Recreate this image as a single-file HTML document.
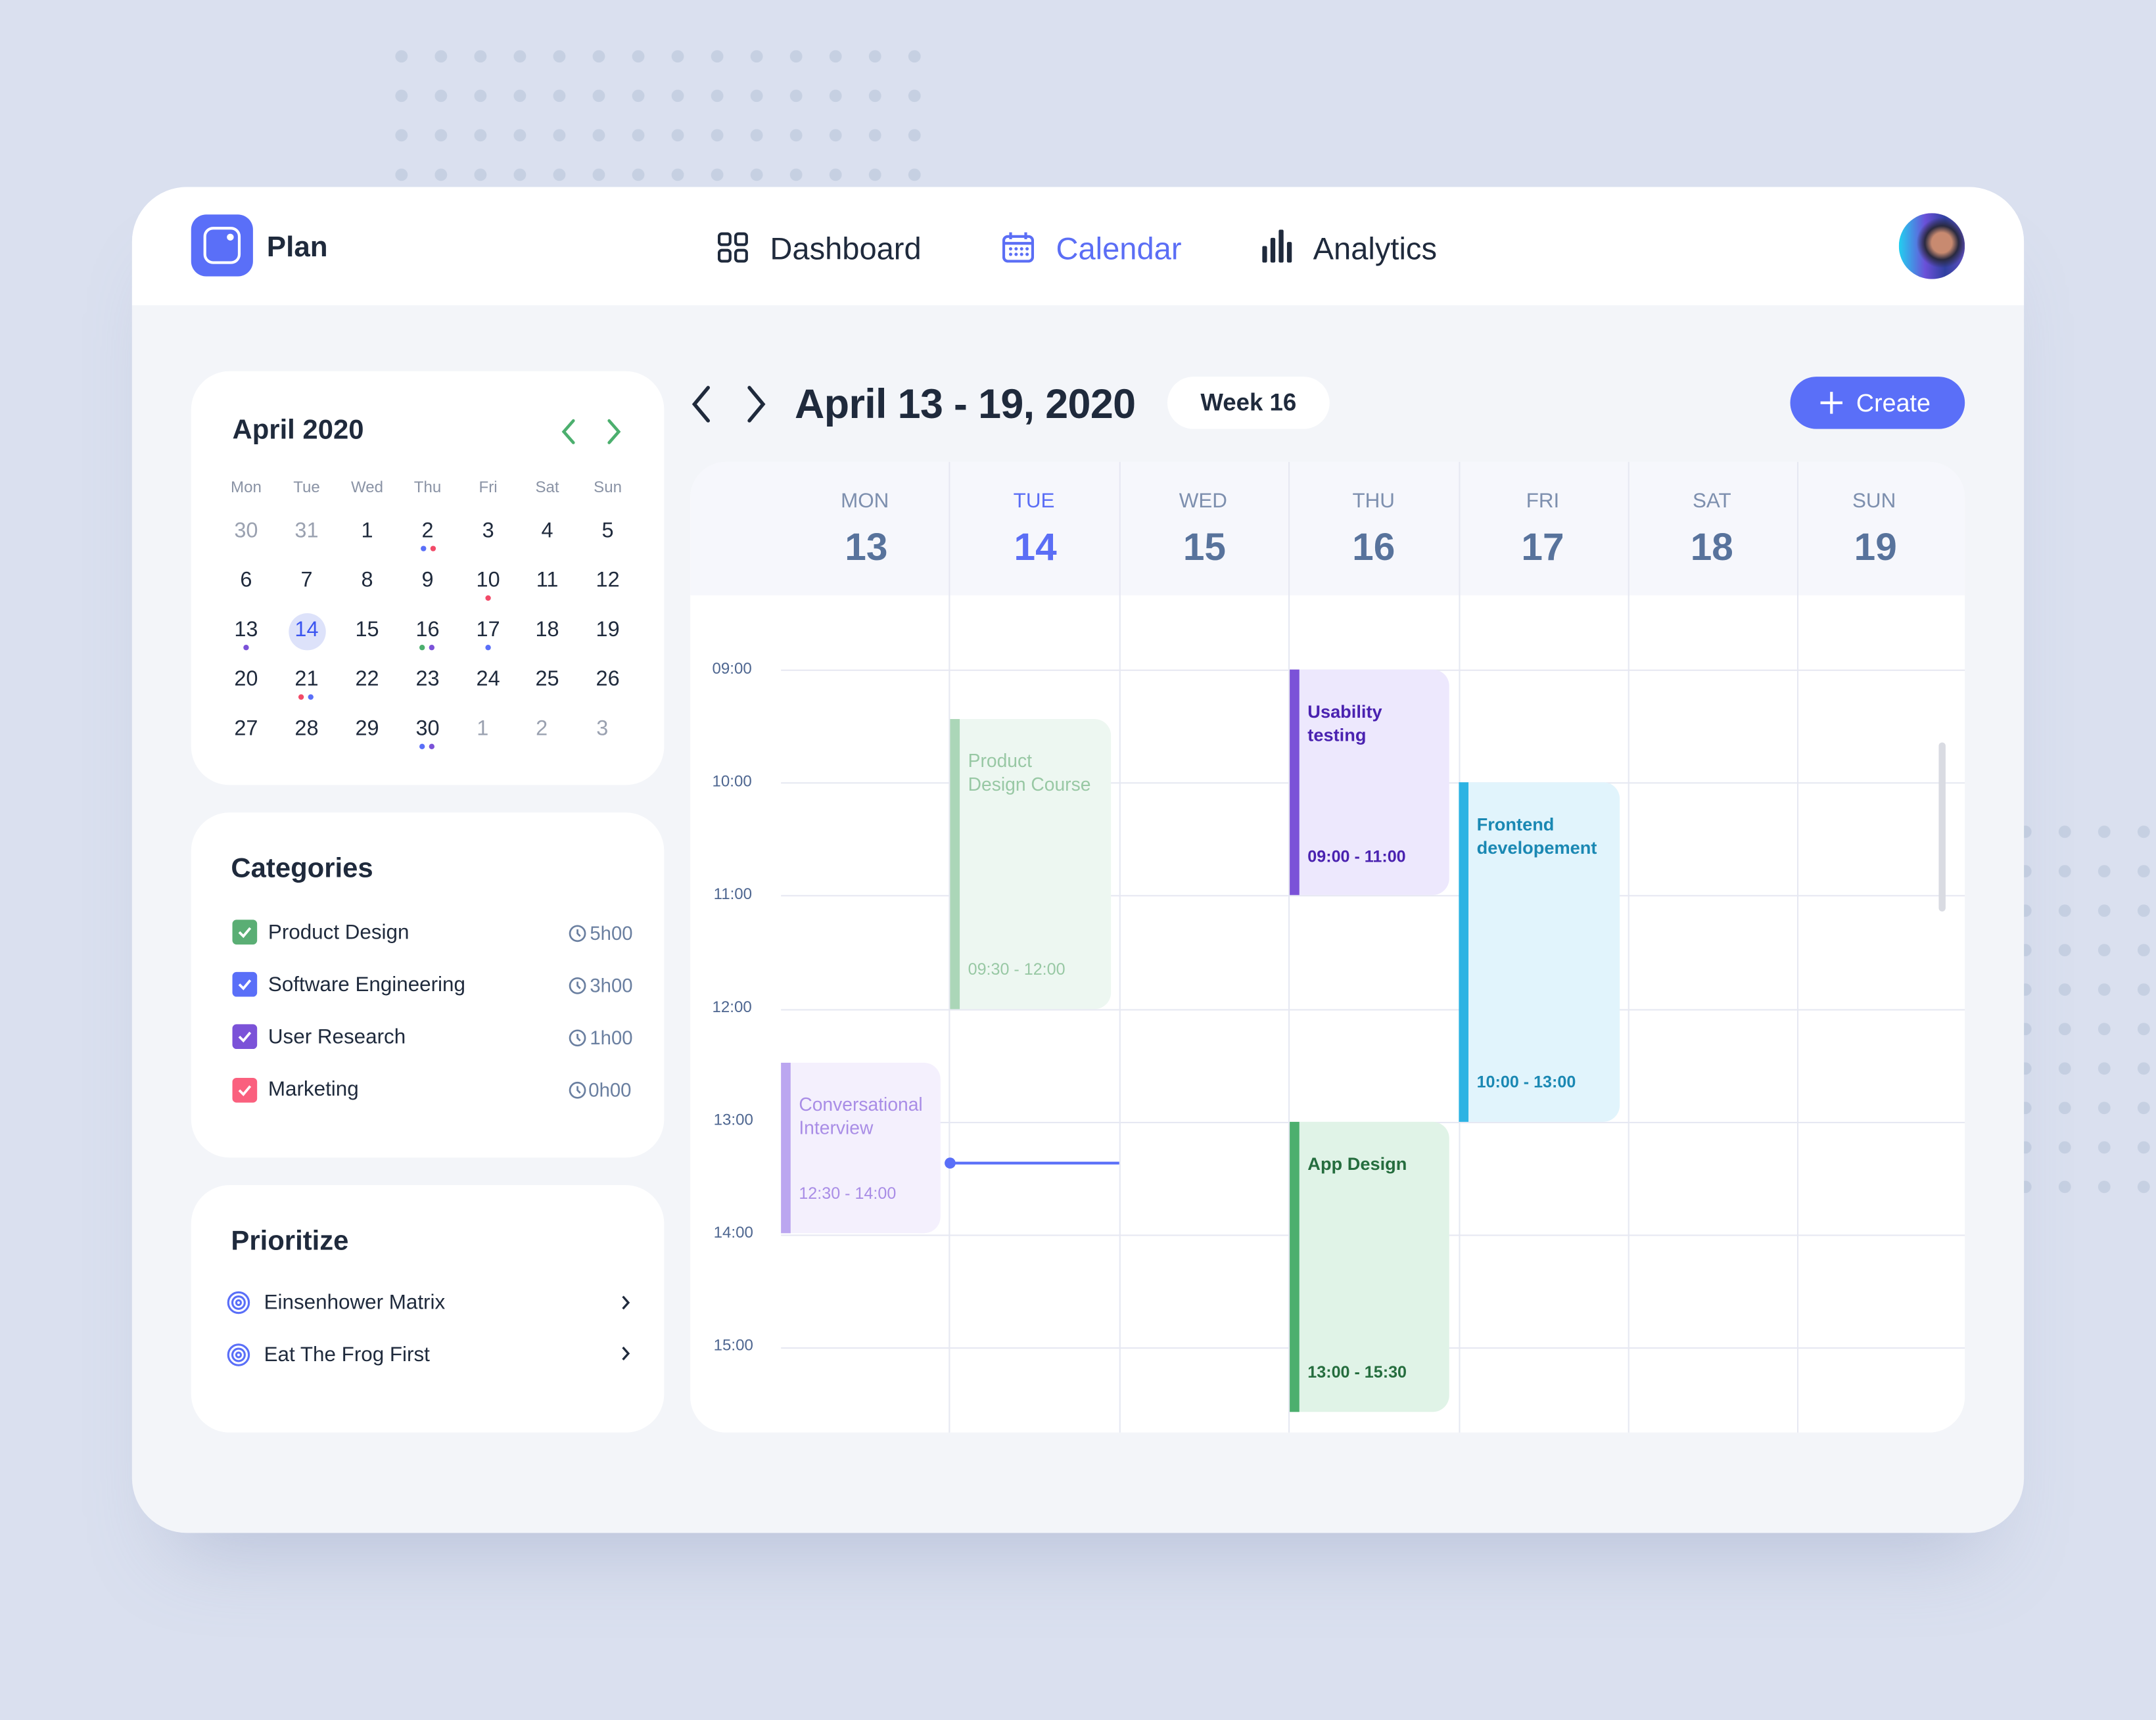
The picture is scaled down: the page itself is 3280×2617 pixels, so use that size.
<!DOCTYPE html>
<html><head><meta charset="utf-8"><style>
*{margin:0;padding:0;box-sizing:border-box}
html,body{width:3280px;height:2616px;overflow:hidden;background:#dae0ef}
#w{position:absolute;left:0;top:0;width:1568px;height:1251px;transform:scale(2.0918);transform-origin:0 0;font-family:"Liberation Sans",sans-serif;color:#1f2a3c}
.a{position:absolute}
.t{position:absolute;transform:translateY(-50%);line-height:1.2;white-space:nowrap}
.c{transform:translate(-50%,-50%)}
.card{position:absolute;background:#fff;border-radius:28px}
.ev{position:absolute;border-radius:0 12px 12px 0}
.ev .bar{position:absolute;left:0;top:0;bottom:0;width:7px}
.ev .tt{position:absolute;left:13px;font-size:13.5px;line-height:17px}
.hl{position:absolute;left:568px;width:861px;height:1px;background:#e6e8f2}
.vl{position:absolute;top:336px;height:706px;width:1px;background:#e6e8f2}
.cb{position:absolute;left:169px;width:18px;height:18px;border-radius:3px}
.cb svg{position:absolute;left:3px;top:3px}
</style></head><body><div id="w">
<svg class="a" style="left:280px;top:30px" width="400" height="110"><defs><pattern id="p" width="28.7" height="28.7" patternUnits="userSpaceOnUse"><circle cx="12" cy="11" r="4.5" fill="#c6d0e2"/></pattern></defs><rect width="400" height="110" fill="url(#p)"/></svg>
<svg class="a" style="left:1460px;top:594px" width="108" height="280"><defs><pattern id="q" x="0" width="28.7" height="28.7" patternUnits="userSpaceOnUse"><circle cx="13" cy="11" r="4.5" fill="#c6d0e2"/></pattern></defs><rect width="108" height="280" fill="url(#q)"/></svg>

<div class="a" style="left:96px;top:136px;width:1376px;height:979px;border-radius:40px;background:#f3f5f9;overflow:hidden;box-shadow:0 40px 60px -30px rgba(120,135,175,.35)">
<div class="a" style="left:0;top:0;width:1376px;height:86px;background:#fff"></div></div>

<div class="a" style="left:139px;top:156px;width:45px;height:45px;border-radius:11px;background:#5a6ff8"></div>
<div class="a" style="left:148px;top:165px;width:27px;height:27px;border-radius:7px;border:2.5px solid #fff"></div>
<div class="a" style="left:165px;top:170px;width:5px;height:5px;border-radius:50%;background:#fff"></div>
<div class="t" style="left:194px;top:180px;font-size:21px;font-weight:bold">Plan</div>

<svg class="a" style="left:522px;top:169px" width="22" height="22" fill="none" stroke="#1f2a3c" stroke-width="2"><rect x="1" y="1" width="8" height="8" rx="2"/><rect x="13" y="1" width="8" height="8" rx="2"/><rect x="1" y="13" width="8" height="8" rx="2"/><rect x="13" y="13" width="8" height="8" rx="2"/></svg>
<div class="t" style="left:560px;top:181px;font-size:22.5px">Dashboard</div>
<svg class="a" style="left:729px;top:169px" width="23" height="22" fill="none" stroke="#5b6ef5" stroke-width="2"><rect x="1" y="3" width="21" height="18" rx="3"/><line x1="1" y1="8" x2="22" y2="8"/><line x1="6" y1="0" x2="6" y2="5"/><line x1="17" y1="0" x2="17" y2="5"/><g fill="#5b6ef5" stroke="none"><circle cx="6" cy="12" r="1.2"/><circle cx="10" cy="12" r="1.2"/><circle cx="14" cy="12" r="1.2"/><circle cx="18" cy="12" r="1.2"/><circle cx="6" cy="16" r="1.2"/><circle cx="10" cy="16" r="1.2"/><circle cx="14" cy="16" r="1.2"/><circle cx="18" cy="16" r="1.2"/></g></svg>
<div class="t" style="left:768px;top:181px;font-size:22.5px;color:#5b6ef5">Calendar</div>
<svg class="a" style="left:918px;top:167px" width="22" height="24" fill="#1f2a3c"><rect x="0" y="12" width="3.5" height="12" rx="1"/><rect x="6" y="6" width="3.5" height="18" rx="1"/><rect x="12" y="0" width="3.5" height="24" rx="1"/><rect x="18" y="9" width="3.5" height="15" rx="1"/></svg>
<div class="t" style="left:955px;top:181px;font-size:22.5px">Analytics</div>
<div class="a" style="left:1381px;top:155px;width:48px;height:48px;border-radius:50%;background:radial-gradient(circle at 65% 45%,#c88a70 0 18%,#2a2a40 30%,transparent 45%),linear-gradient(90deg,#22d0f0 0%,#6a50d8 40%,#3040a0 70%,#6050c0 100%)"></div>

<div class="card" style="left:139px;top:270px;width:344px;height:301px"></div>
<div class="t" style="left:169px;top:313px;font-size:20px;font-weight:bold">April 2020</div>
<svg class="a" style="left:405px;top:304px" width="50" height="20" fill="none" stroke="#4caf6e" stroke-width="2.2" stroke-linecap="round"><path d="M12 2 L5 10 L12 18"/><path d="M38 2 L45 10 L38 18"/></svg>
<div style="font-size:11.5px;color:#8a93a5">
<div class="t c" style="left:179px;top:356px">Mon</div><div class="t c" style="left:223px;top:356px">Tue</div><div class="t c" style="left:267px;top:356px">Wed</div><div class="t c" style="left:311px;top:356px">Thu</div><div class="t c" style="left:355px;top:356px">Fri</div><div class="t c" style="left:398px;top:356px">Sat</div><div class="t c" style="left:442px;top:356px">Sun</div></div>
<div class="a" style="left:210px;top:446px;width:27px;height:27px;border-radius:50%;background:#dde2fa"></div>
<div style="font-size:15.5px">
<div class="t c" style="left:179px;top:387px;color:#9aa1b0">30</div><div class="t c" style="left:223px;top:387px;color:#9aa1b0">31</div><div class="t c" style="left:267px;top:387px">1</div><div class="t c" style="left:311px;top:387px">2</div><div class="t c" style="left:355px;top:387px">3</div><div class="t c" style="left:398px;top:387px">4</div><div class="t c" style="left:442px;top:387px">5</div>
<div class="t c" style="left:179px;top:423px">6</div><div class="t c" style="left:223px;top:423px">7</div><div class="t c" style="left:267px;top:423px">8</div><div class="t c" style="left:311px;top:423px">9</div><div class="t c" style="left:355px;top:423px">10</div><div class="t c" style="left:398px;top:423px">11</div><div class="t c" style="left:442px;top:423px">12</div>
<div class="t c" style="left:179px;top:459px">13</div><div class="t c" style="left:223px;top:459px;color:#3b55f0">14</div><div class="t c" style="left:267px;top:459px">15</div><div class="t c" style="left:311px;top:459px">16</div><div class="t c" style="left:355px;top:459px">17</div><div class="t c" style="left:398px;top:459px">18</div><div class="t c" style="left:442px;top:459px">19</div>
<div class="t c" style="left:179px;top:495px">20</div><div class="t c" style="left:223px;top:495px">21</div><div class="t c" style="left:267px;top:495px">22</div><div class="t c" style="left:311px;top:495px">23</div><div class="t c" style="left:355px;top:495px">24</div><div class="t c" style="left:398px;top:495px">25</div><div class="t c" style="left:442px;top:495px">26</div>
<div class="t c" style="left:179px;top:531px">27</div><div class="t c" style="left:223px;top:531px">28</div><div class="t c" style="left:267px;top:531px">29</div><div class="t c" style="left:311px;top:531px">30</div><div class="t c" style="left:351px;top:531px;color:#9aa1b0">1</div><div class="t c" style="left:394px;top:531px;color:#9aa1b0">2</div><div class="t c" style="left:438px;top:531px;color:#9aa1b0">3</div></div>
<svg class="a" style="left:0;top:0" width="500" height="560"><g>
<circle cx="308" cy="399" r="2" fill="#5a6ff8"/><circle cx="315" cy="399" r="2" fill="#f24a68"/>
<circle cx="355" cy="435" r="2" fill="#f24a68"/>
<circle cx="179" cy="471" r="2" fill="#7b52d8"/><circle cx="307" cy="471" r="2" fill="#4caf6e"/><circle cx="314" cy="471" r="2" fill="#7b52d8"/><circle cx="355" cy="471" r="2" fill="#5a6ff8"/>
<circle cx="219" cy="507" r="2" fill="#f24a68"/><circle cx="226" cy="507" r="2" fill="#5a6ff8"/>
<circle cx="307" cy="543" r="2" fill="#5a6ff8"/><circle cx="314" cy="543" r="2" fill="#7b52d8"/></g></svg>

<div class="card" style="left:139px;top:591px;width:344px;height:251px"></div>
<div class="t" style="left:168px;top:632px;font-size:20px;font-weight:bold">Categories</div>
<div class="cb" style="top:669px;background:#5aae74"><svg width="12" height="12" fill="none" stroke="#fff" stroke-width="1.8"><path d="M2 6 L5 9 L10 3"/></svg></div>
<div class="cb" style="top:707px;background:#5a6ff8"><svg width="12" height="12" fill="none" stroke="#fff" stroke-width="1.8"><path d="M2 6 L5 9 L10 3"/></svg></div>
<div class="cb" style="top:745px;background:#7b52d8"><svg width="12" height="12" fill="none" stroke="#fff" stroke-width="1.8"><path d="M2 6 L5 9 L10 3"/></svg></div>
<div class="cb" style="top:784px;background:#fa607e"><svg width="12" height="12" fill="none" stroke="#fff" stroke-width="1.8"><path d="M2 6 L5 9 L10 3"/></svg></div>
<div style="font-size:15px">
<div class="t" style="left:195px;top:679px">Product Design</div>
<div class="t" style="left:195px;top:717px">Software Engineering</div>
<div class="t" style="left:195px;top:755px">User Research</div>
<div class="t" style="left:195px;top:793px">Marketing</div></div>
<div style="font-size:14px;color:#6a7fa0">
<div class="t" style="left:429px;top:679px">5h00</div><div class="t" style="left:429px;top:717px">3h00</div><div class="t" style="left:429px;top:755px">1h00</div><div class="t" style="left:428px;top:793px">0h00</div></div>
<svg class="a" style="left:413px;top:672px" width="14" height="130" fill="none" stroke="#6a7fa0" stroke-width="1.3"><g><circle cx="7" cy="7" r="5.5"/><path d="M7 4 V7 L9 9"/></g><g transform="translate(0,38)"><circle cx="7" cy="7" r="5.5"/><path d="M7 4 V7 L9 9"/></g><g transform="translate(0,76)"><circle cx="7" cy="7" r="5.5"/><path d="M7 4 V7 L9 9"/></g><g transform="translate(0,114)"><circle cx="7" cy="7" r="5.5"/><path d="M7 4 V7 L9 9"/></g></svg>

<div class="card" style="left:139px;top:862px;width:344px;height:180px"></div>
<div class="t" style="left:168px;top:903px;font-size:20px;font-weight:bold">Prioritize</div>
<svg class="a" style="left:165px;top:939px" width="300" height="56" fill="none" stroke="#5a6ff8" stroke-width="1.5"><g><circle cx="8.5" cy="8.5" r="7.5"/><circle cx="8.5" cy="8.5" r="4.5"/><circle cx="8.5" cy="8.5" r="1.7"/></g><g transform="translate(0,38)"><circle cx="8.5" cy="8.5" r="7.5"/><circle cx="8.5" cy="8.5" r="4.5"/><circle cx="8.5" cy="8.5" r="1.7"/></g><g stroke="#1f2a3c" stroke-width="1.6"><path d="M288 4 L292 8.5 L288 13"/><path d="M288 41 L292 45.5 L288 50"/></g></svg>
<div class="t" style="left:192px;top:948px;font-size:15px">Einsenhower Matrix</div>
<div class="t" style="left:192px;top:986px;font-size:15px">Eat The Frog First</div>

<svg class="a" style="left:500px;top:280px" width="60" height="28" fill="none" stroke="#1f2a3c" stroke-width="2.6" stroke-linecap="round"><path d="M15 2 L5 14 L15 26"/><path d="M45 2 L55 14 L45 26"/></svg>
<div class="t" style="left:578px;top:295px;font-size:30px;font-weight:bold;letter-spacing:-0.3px">April 13 - 19, 2020</div>
<div class="a" style="left:849px;top:274px;width:118px;height:38px;border-radius:19px;background:#fff"></div>
<div class="t c" style="left:908px;top:293px;font-size:17.5px;font-weight:bold">Week 16</div>
<div class="a" style="left:1302px;top:274px;width:127px;height:38px;border-radius:19px;background:#5a6ff8"></div>
<svg class="a" style="left:1324px;top:285px" width="16" height="16" stroke="#fff" stroke-width="2"><path d="M8 0 V16 M0 8 H16"/></svg>
<div class="t" style="left:1350px;top:294px;font-size:18px;color:#fff">Create</div>

<div class="a" style="left:502px;top:336px;width:927px;height:706px;background:#fff;border-radius:26px;overflow:hidden"><div class="a" style="left:0;top:0;width:927px;height:97px;background:#f6f7fc"></div></div>
<div class="vl" style="left:690px"></div><div class="vl" style="left:814px"></div><div class="vl" style="left:937px"></div><div class="vl" style="left:1061px"></div><div class="vl" style="left:1184px"></div><div class="vl" style="left:1307px"></div>
<div class="hl" style="top:487px"></div><div class="hl" style="top:569px"></div><div class="hl" style="top:651px"></div><div class="hl" style="top:734px"></div><div class="hl" style="top:816px"></div><div class="hl" style="top:898px"></div><div class="hl" style="top:980px"></div>
<div style="font-size:11.5px;color:#4e6690">
<div class="t" style="left:518px;top:488px">09:00</div><div class="t" style="left:518px;top:570px">10:00</div><div class="t" style="left:519px;top:652px">11:00</div><div class="t" style="left:518px;top:734px">12:00</div><div class="t" style="left:519px;top:816px">13:00</div><div class="t" style="left:519px;top:898px">14:00</div><div class="t" style="left:519px;top:980px">15:00</div></div>
<div style="font-size:15px;color:#7d8fae">
<div class="t c" style="left:629px;top:365px">MON</div><div class="t c" style="left:752px;top:365px;color:#5b6ef5">TUE</div><div class="t c" style="left:875px;top:365px">WED</div><div class="t c" style="left:999px;top:365px">THU</div><div class="t c" style="left:1122px;top:365px">FRI</div><div class="t c" style="left:1245px;top:365px">SAT</div><div class="t c" style="left:1363px;top:365px">SUN</div></div>
<div style="font-size:28px;font-weight:bold;color:#58739c">
<div class="t c" style="left:630px;top:398px">13</div><div class="t c" style="left:753px;top:398px;color:#5b6ef5">14</div><div class="t c" style="left:876px;top:398px">15</div><div class="t c" style="left:999px;top:398px">16</div><div class="t c" style="left:1122px;top:398px">17</div><div class="t c" style="left:1245px;top:398px">18</div><div class="t c" style="left:1364px;top:398px">19</div></div>

<div class="ev" style="left:691px;top:523px;width:117px;height:211px;background:#edf7f1"><div class="bar" style="background:#abd6b8"></div><div class="tt" style="top:22px;color:#98c8a4">Product<br>Design Course</div><div class="tt" style="top:174px;font-size:12px;color:#98c8a4">09:30 - 12:00</div></div>
<div class="ev" style="left:938px;top:487px;width:116px;height:164px;background:#ede8fd"><div class="bar" style="background:#7b52d8"></div><div class="tt" style="top:22px;color:#4a22b0;font-weight:bold;font-size:13px">Usability<br>testing</div><div class="tt" style="top:128px;font-size:12px;color:#4a22b0;font-weight:bold">09:00 - 11:00</div></div>
<div class="ev" style="left:1061px;top:569px;width:117px;height:247px;background:#e1f4fc"><div class="bar" style="background:#2db3e3"></div><div class="tt" style="top:22px;color:#1a88b3;font-weight:bold;font-size:13px">Frontend<br>developement</div><div class="tt" style="top:210px;font-size:12px;color:#1a88b3;font-weight:bold">10:00 - 13:00</div></div>
<div class="ev" style="left:938px;top:816px;width:116px;height:211px;background:#e0f3e7"><div class="bar" style="background:#4caf6e"></div><div class="tt" style="top:22px;color:#256d3e;font-weight:bold;font-size:13px">App Design</div><div class="tt" style="top:174px;font-size:12px;color:#256d3e;font-weight:bold">13:00 - 15:30</div></div>
<div class="ev" style="left:568px;top:773px;width:116px;height:124px;background:#f4f0fd"><div class="bar" style="background:#bba6f0"></div><div class="tt" style="top:22px;color:#a98de6">Conversational<br>Interview</div><div class="tt" style="top:87px;font-size:12px;color:#a98de6">12:30 - 14:00</div></div>
<div class="a" style="left:690px;top:845px;width:124px;height:2px;background:#5a6ff8"></div>
<div class="a" style="left:687px;top:842px;width:8px;height:8px;border-radius:50%;background:#5a6ff8"></div>
<div class="a" style="left:1410px;top:540px;width:5px;height:123px;border-radius:3px;background:#d9dbe2"></div>
</div></body></html>
